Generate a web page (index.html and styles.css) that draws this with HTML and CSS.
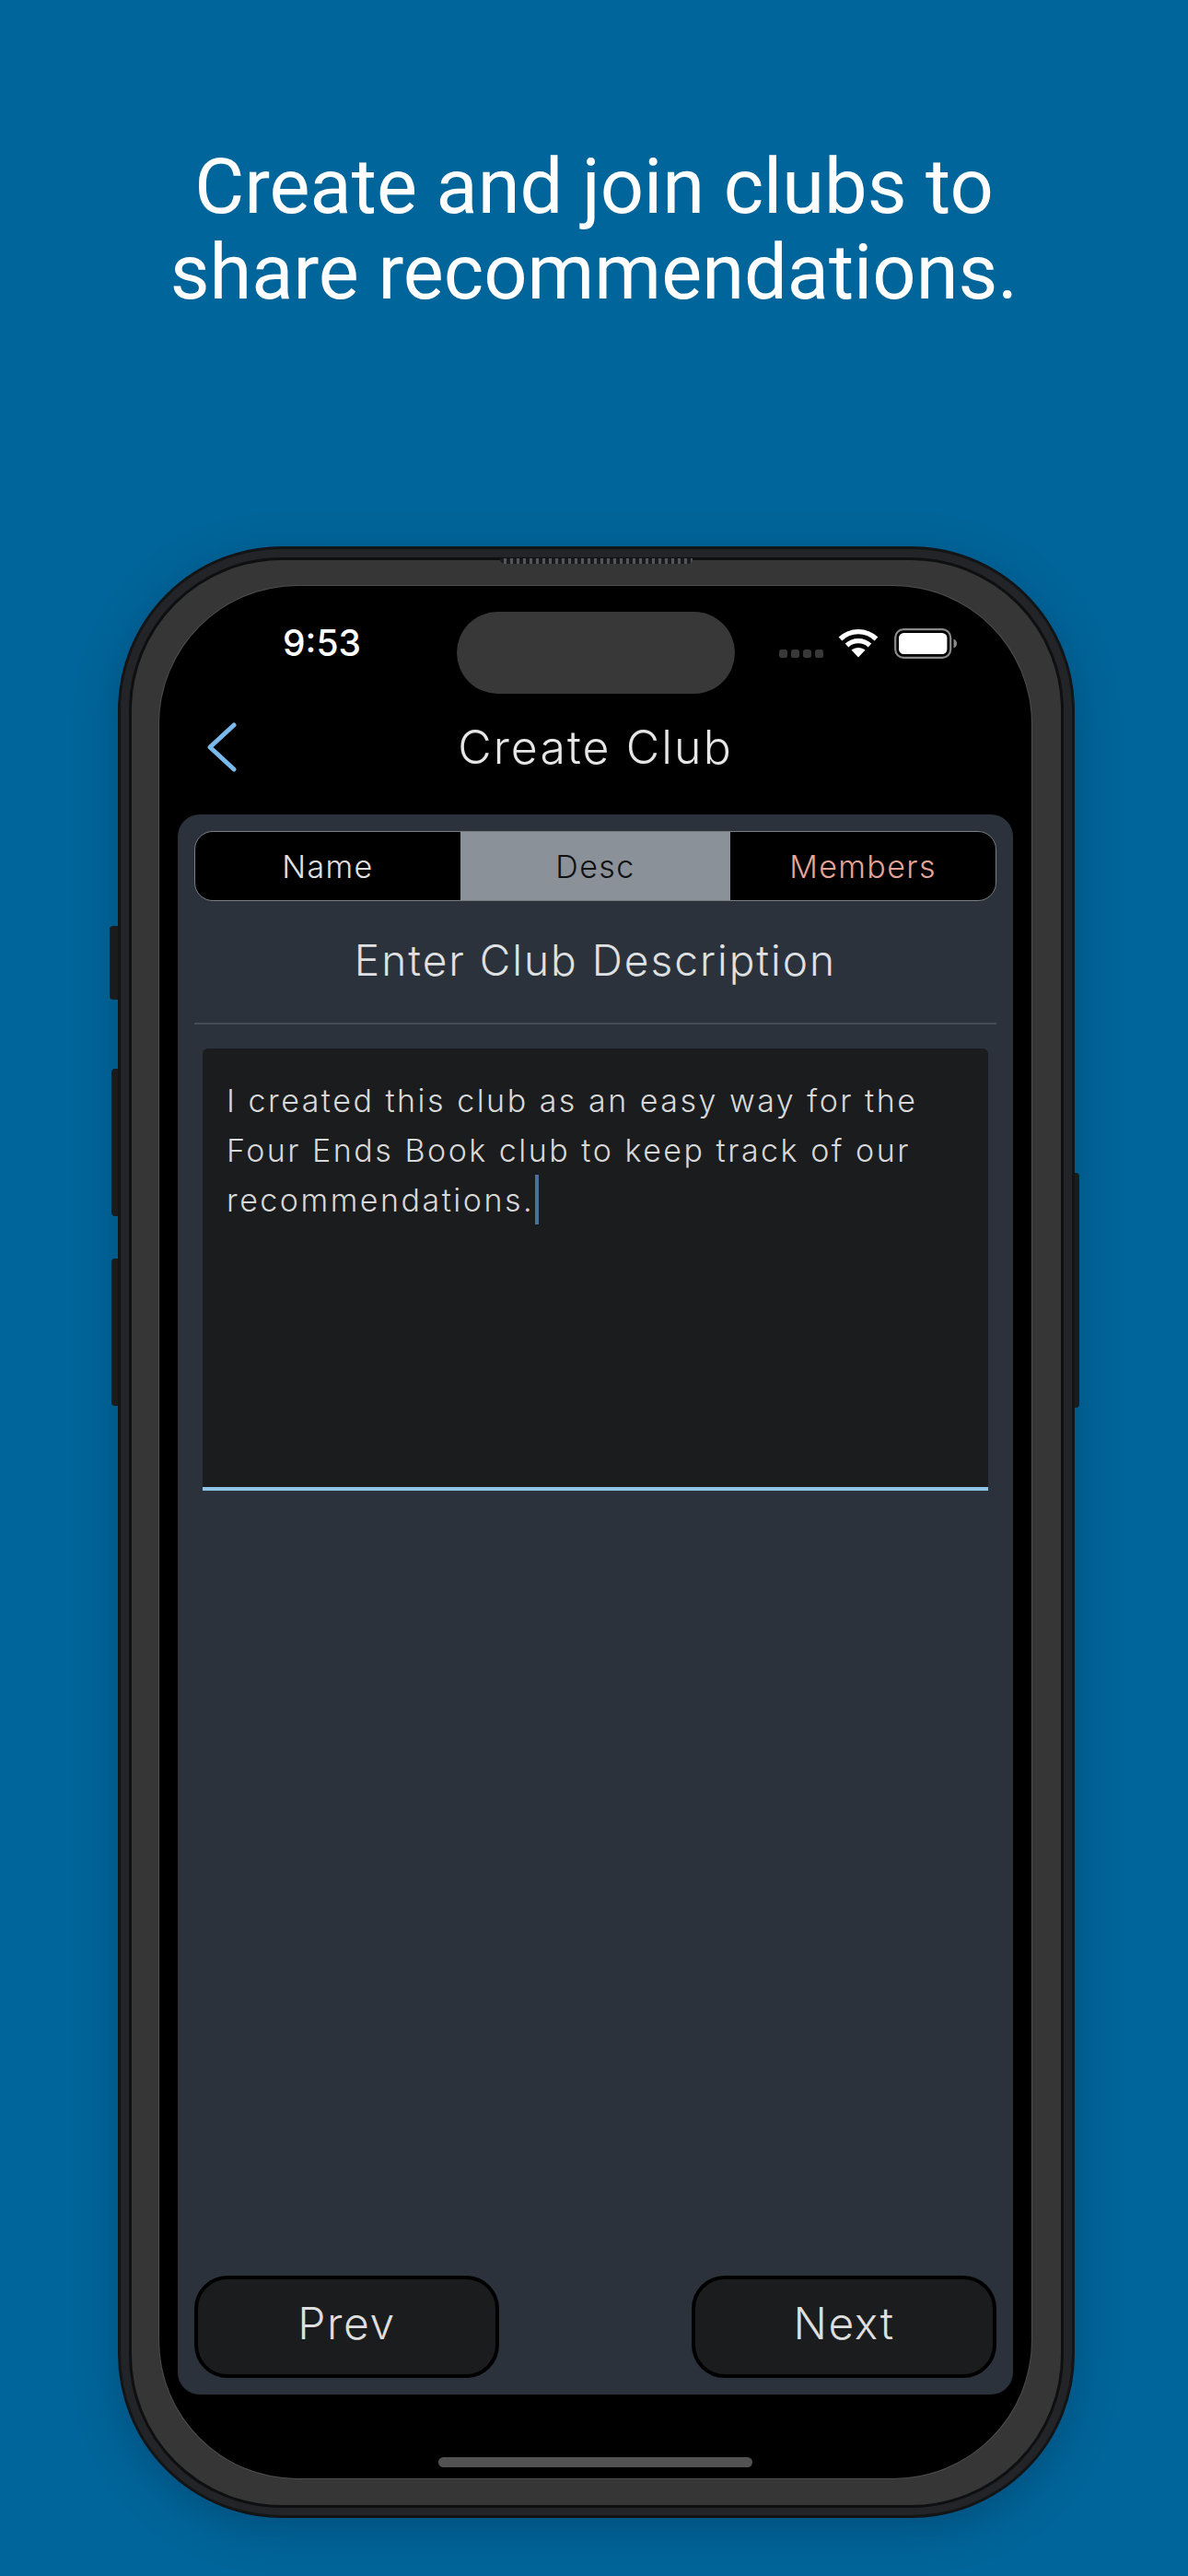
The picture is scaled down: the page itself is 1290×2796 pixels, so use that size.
FILE: index.html
```html
<!DOCTYPE html>
<html lang="en">
<head>
<meta charset="utf-8">
<title>Create Club</title>
<link rel="stylesheet" href="styles.css">
</head>
<body>
<h1 class="headline">Create and join clubs to<br>share recommendations.</h1>
<div class="phone">
  <span class="side mute"></span>
  <span class="side vol-up"></span>
  <span class="side vol-down"></span>
  <span class="side power"></span>
  <span class="speaker"></span>
  <div class="bezel">
    <main class="screen">
      <div class="status">
        <span class="time">9:53</span>
        <span class="island"></span>
        <div class="status-icons">
          <span class="dots"><i></i><i></i><i></i><i></i></span>
          <svg class="wifi" viewBox="0 0 44 32" aria-hidden="true">
            <path d="M2.5 11.5C13.5 1 30.5 1 41.5 11.5" />
            <path d="M9.5 18.5C16.5 12 27.5 12 34.5 18.5" />
            <path class="wedge" d="M22 31.5L14.5 23.5C18.5 20 25.5 20 29.5 23.5Z" />
          </svg>
          <svg class="battery" viewBox="0 0 68 33" aria-hidden="true">
            <rect class="shell" x="1.2" y="1.2" width="60" height="30.6" rx="9" />
            <rect class="fill" x="5" y="5" width="52.4" height="23" rx="5.5" />
            <path class="nub" d="M64.5 11.5C67 12.5 68 14.5 68 16.5S67 20.5 64.5 21.5Z" />
          </svg>
        </div>
      </div>
      <header class="nav">
        <svg class="back" viewBox="0 0 32 54" aria-hidden="true"><path d="M29 3L3 27L29 51" /></svg>
        <h2 class="title">Create Club</h2>
      </header>
      <section class="panel">
        <div class="tabs">
          <div class="tab">Name</div>
          <div class="tab active">Desc</div>
          <div class="tab pending">Members</div>
        </div>
        <h3 class="step">Enter Club Description</h3>
        <div class="field">
          <p class="field-text">I created this club as an easy way for the Four Ends Book club to keep track of our recommendations.<span class="caret"></span></p>
        </div>
        <div class="actions">
          <button class="btn">Prev</button>
          <button class="btn">Next</button>
        </div>
      </section>
      <div class="home"><span class="home-bar"></span></div>
    </main>
  </div>
</div>
</body>
</html>
```
FILE: styles.css
```css
* { box-sizing: border-box; }
html, body { margin: 0; padding: 0; }
body {
  width: 1290px;
  height: 2796px;
  overflow: hidden;
  background: #00659a;
  font-family: "Inter", "Liberation Sans", sans-serif;
}
.headline {
  margin: 0;
  height: 593px;
  padding-top: 156px;
  text-align: center;
  font: 400 83px/93px "Roboto", sans-serif;
  color: #fff;
}
.phone {
  position: relative;
  margin-left: 128px;
  width: 1039px;
  height: 2140px;
  padding: 9px 9px 8px;
  border: 3px solid #131416;
  border-radius: 178px;
  background: #232427;
  box-shadow: 0 12px 46px rgba(0, 40, 70, .35);
}
.side {
  position: absolute;
  background: #1a1b1d;
  border-radius: 4px 0 0 4px;
}
.mute { left: -12px; top: 409px; width: 9px; height: 80px; }
.vol-up { left: -10px; top: 564px; width: 7px; height: 160px; }
.vol-down { left: -10px; top: 770px; width: 7px; height: 160px; }
.power { right: -8px; top: 677px; width: 5px; height: 255px; border-radius: 0 4px 4px 0; }
.speaker {
  position: absolute;
  left: 412px;
  top: 10px;
  width: 209px;
  height: 6px;
  border-radius: 0 0 5px 5px;
  background: repeating-linear-gradient(90deg, #191a1b 0 4px, #55565a 4px 7px);
}
.bezel {
  height: 100%;
  padding: 28px 32px 29px 30px;
  border: 3px solid #0e0f11;
  border-radius: 166px;
  background: #363636;
}
.screen {
  display: flex;
  flex-direction: column;
  height: 100%;
  padding-top: 28px;
  border-radius: 150px;
  background: #000;
  box-shadow: 0 0 0 1px #4e4e4e;
}
.status {
  display: flex;
  align-items: center;
  height: 89px;
  padding-left: 134px;
}
.time {
  width: 189px;
  margin-top: -22px;
  font: 500 39px/1 "Inter", sans-serif;
  color: #fff;
}
.island {
  width: 302px;
  height: 89px;
  border-radius: 45px;
  background: #383838;
}
.status-icons {
  display: flex;
  align-items: flex-start;
  height: 89px;
  padding: 18px 0 0 48px;
}
.dots { display: flex; gap: 4px; margin-top: 23px; }
.dots i { width: 9px; height: 9px; border-radius: 2.5px; background: #383838; }
.wifi { width: 44px; height: 32px; margin-left: 16px; }
.wifi path { fill: none; stroke: #fff; stroke-width: 5.4; stroke-linecap: butt; }
.wifi .wedge { fill: #fff; stroke: none; }
.battery { width: 68px; height: 33px; margin-left: 17px; }
.shell { fill: none; stroke: #8a8a8a; stroke-width: 2.2; }
.fill { fill: #fff; }
.nub { fill: #8a8a8a; }
.nav {
  position: relative;
  display: flex;
  align-items: center;
  justify-content: center;
  height: 131px;
  padding-bottom: 16px;
}
.back {
  position: absolute;
  left: 52px;
  top: 31px;
  width: 32px;
  height: 54px;
  fill: none;
  stroke: #79b9ec;
  stroke-width: 5;
  stroke-linecap: round;
  stroke-linejoin: round;
}
.title {
  margin: 0;
  font: 300 50px/1 "Inter", sans-serif;
  letter-spacing: 2.1px;
  color: #e6e6e6;
}
.panel {
  display: flex;
  flex-direction: column;
  height: 1715px;
  margin: 0 20px;
  padding: 18px;
  border-radius: 24px;
  background: #2b323c;
}
.tabs {
  display: flex;
  height: 76px;
  overflow: hidden;
  border: 1px solid #777d85;
  border-radius: 20px;
  background: #000;
}
.tab {
  flex: 1;
  display: flex;
  align-items: center;
  justify-content: center;
  font-weight: 300;
  font-size: 34px;
  letter-spacing: 1.4px;
  color: #e0e0e0;
}
.active { flex: 0 0 293px; background: #8b9199; color: #111; }
.pending { color: #e5a596; }
.step {
  height: 134px;
  margin: 0;
  padding-top: 34px;
  border-bottom: 2px solid #464d56;
  text-align: center;
  font-weight: 300;
  font-size: 46px;
  line-height: 60px;
  letter-spacing: 2px;
  color: #dfe0e2;
}
.field {
  height: 480px;
  margin: 26px 9px 0;
  padding: 30px 26px;
  border-bottom: 4px solid #8ec5e6;
  border-radius: 6px 6px 0 0;
  background: #1b1c1e;
}
.field-text {
  margin: 0;
  font-weight: 300;
  font-size: 34px;
  line-height: 53.5px;
  letter-spacing: 2.5px;
  color: #d8d8d8;
}
.caret {
  display: inline-block;
  width: 4px;
  height: 54px;
  margin-left: 1px;
  vertical-align: -14px;
  background: #4b7196;
}
.actions {
  display: flex;
  justify-content: space-between;
  margin-top: auto;
}
.btn {
  width: 331px;
  height: 111px;
  padding: 0 0 8px;
  border: 4px solid #000;
  border-radius: 36px;
  background: #1b1c1e;
  font-family: "Inter", sans-serif;
  font-weight: 300;
  font-size: 48px;
  letter-spacing: 1.6px;
  color: #dedede;
}
.home {
  display: flex;
  justify-content: center;
  padding-top: 68px;
}
.home-bar {
  width: 341px;
  height: 11px;
  border-radius: 6px;
  background: #525252;
}
```
